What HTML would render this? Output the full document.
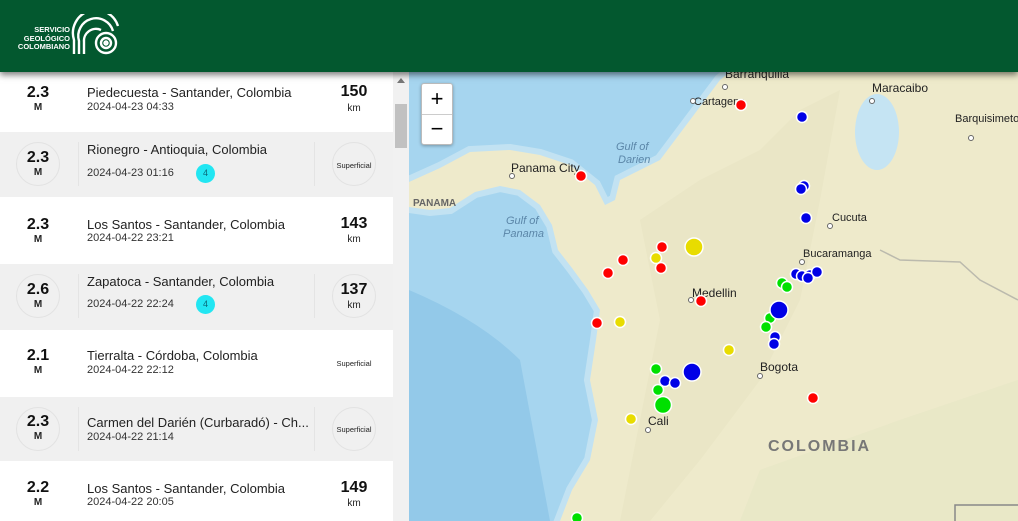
<!DOCTYPE html>
<html><head><meta charset="utf-8"><style>
*{margin:0;padding:0;box-sizing:border-box}
body{width:1018px;height:521px;overflow:hidden;font-family:"Liberation Sans",sans-serif;background:#fff;position:relative}
.hdr{position:absolute;left:0;top:0;width:1018px;height:72px;background:#03582f;box-shadow:0 3px 6px rgba(0,0,0,.5);z-index:5}
.logo{position:absolute;left:16px;top:26px;color:#fff;font-size:7.5px;font-weight:bold;line-height:8.5px;text-align:right;width:54px}
.panel{position:absolute;left:0;top:72px;width:393px;height:449px;overflow:hidden}
.row{position:absolute;left:0;width:393px}
.g{background:#f0f0f0}
.mag{position:absolute;left:18px;width:40px;text-align:center;font-size:16px;font-weight:bold;color:#111}
.m{position:absolute;left:18px;width:40px;text-align:center;font-size:10px;font-weight:bold;color:#222}
.t{position:absolute;left:87px;font-size:13px;color:#222;white-space:nowrap}
.d{position:absolute;left:87px;font-size:11px;color:#333}
.dep{position:absolute;left:334px;width:40px;text-align:center;font-size:16px;font-weight:bold;color:#111}
.km{position:absolute;left:334px;width:40px;text-align:center;font-size:10px;color:#222}
.sup{position:absolute;left:330px;width:48px;text-align:center;font-size:7.5px;color:#222}
.circ{position:absolute;width:44px;height:44px;border-radius:50%;border:1px solid #e2e2e2}
.vl{position:absolute;width:1px;background:#e4e4e4}
.badge{position:absolute;left:196px;width:19px;height:19px;border-radius:50%;background:#22e6f2;color:#0a6a7a;font-size:9px;text-align:center;line-height:19px}
.sb{position:absolute;left:393px;top:72px;width:16px;height:449px;background:#f1f1f1}
.map{position:absolute;left:409px;top:72px;width:609px;height:449px}
.zoom{position:absolute;left:421px;top:83px;width:32px;height:62px;background:#fff;border:1px solid #bbb;border-radius:3px;box-shadow:0 1px 3px rgba(0,0,0,.3)}
</style></head><body>
<div class="hdr">
<div class="logo">SERVICIO<br>GEOLÓGICO<br>COLOMBIANO</div>
<svg style="position:absolute;left:71px;top:14px" width="52" height="44" viewBox="0 0 52 44" fill="none" stroke="#fff" stroke-width="2.4">
<path d="M3 40 V26 A22 22 0 0 1 47 12"/><path d="M8 40 V27 A17 17 0 0 1 42 17"/><path d="M13 40 V28 A12 12 0 0 1 30 16"/>
<circle cx="35" cy="29" r="10"/><circle cx="35" cy="29" r="5"/><circle cx="35" cy="29" r="1.5"/>
</svg>
</div>

<div class="panel">
<div class="row" style="top:-4px;height:64px"><div class="mag" style="top:16px">2.3</div><div class="m" style="top:34px">M</div><div class="t" style="top:17px">Piedecuesta - Santander, Colombia</div><div class="d" style="top:33px">2024-04-23 04:33</div><div class="dep" style="top:15px">150</div><div class="km" style="top:35px">km</div></div>
<div class="row g" style="top:60px;height:65px"><div class="circ" style="left:16px;top:10px"></div><div class="vl" style="left:78px;top:10px;height:44px"></div><div class="vl" style="left:314px;top:10px;height:44px"></div><div class="circ" style="left:332px;top:10px"></div><div class="mag" style="top:17px">2.3</div><div class="m" style="top:35px">M</div><div class="t" style="top:10px">Rionegro - Antioquia, Colombia</div><div class="d" style="top:35px">2024-04-23 01:16</div><div class="badge" style="top:32px">4</div><div class="sup" style="top:29px">Superficial</div></div>
<div class="row" style="top:125px;height:67px"><div class="mag" style="top:19px">2.3</div><div class="m" style="top:37px">M</div><div class="t" style="top:20px">Los Santos - Santander, Colombia</div><div class="d" style="top:35px">2024-04-22 23:21</div><div class="dep" style="top:18px">143</div><div class="km" style="top:37px">km</div></div>
<div class="row g" style="top:192px;height:66px"><div class="circ" style="left:16px;top:10px"></div><div class="vl" style="left:78px;top:10px;height:44px"></div><div class="vl" style="left:314px;top:10px;height:44px"></div><div class="circ" style="left:332px;top:10px"></div><div class="mag" style="top:17px">2.6</div><div class="m" style="top:35px">M</div><div class="t" style="top:10px">Zapatoca - Santander, Colombia</div><div class="d" style="top:34px">2024-04-22 22:24</div><div class="badge" style="top:31px">4</div><div class="dep" style="top:17px">137</div><div class="km" style="top:36px">km</div></div>
<div class="row" style="top:258px;height:67px"><div class="mag" style="top:17px">2.1</div><div class="m" style="top:35px">M</div><div class="t" style="top:18px">Tierralta - Córdoba, Colombia</div><div class="d" style="top:34px">2024-04-22 22:12</div><div class="sup" style="top:29px">Superficial</div></div>
<div class="row g" style="top:325px;height:64px"><div class="circ" style="left:16px;top:10px"></div><div class="vl" style="left:78px;top:10px;height:44px"></div><div class="vl" style="left:314px;top:10px;height:44px"></div><div class="circ" style="left:332px;top:10px"></div><div class="mag" style="top:16px">2.3</div><div class="m" style="top:34px">M</div><div class="t" style="top:18px">Carmen del Darién (Curbaradó) - Ch...</div><div class="d" style="top:34px">2024-04-22 21:14</div><div class="sup" style="top:28px">Superficial</div></div>
<div class="row" style="top:389px;height:70px"><div class="mag" style="top:18px">2.2</div><div class="m" style="top:36px">M</div><div class="t" style="top:20px">Los Santos - Santander, Colombia</div><div class="d" style="top:35px">2024-04-22 20:05</div><div class="dep" style="top:18px">149</div><div class="km" style="top:37px">km</div></div>
</div>
<div class="sb"><div style="position:absolute;left:2px;top:32px;width:12px;height:44px;background:#c1c1c1"></div><div style="position:absolute;left:4px;top:6px;border-left:4px solid transparent;border-right:4px solid transparent;border-bottom:5px solid #777"></div></div>

<svg class="map" viewBox="409 72 609 449" width="609" height="449">
<rect x="409" y="72" width="609" height="449" fill="#a6d5ef"/>
<path d="M409 290 Q480 320 520 360 L550 521 L409 521 Z" fill="#93c9e9"/>
<path d="M409 182 L440 168 470 152 510 150 540 155 570 165 595 185 605 205 615 200 620 180 640 170 660 160 675 140 690 120 705 100 720 80 730 72 L1018 72 L1018 521 L560 521 L572 490 590 460 598 420 590 380 596 340 600 310 588 290 572 268 558 250 552 225 540 205 520 190 500 186 475 192 450 208 430 210 409 207 Z" fill="#c2e2f2" stroke="#c2e2f2" stroke-width="12"/>
<path d="M409 182 L440 168 470 152 510 150 540 155 570 165 595 185 605 205 615 200 620 180 640 170 660 160 675 140 690 120 705 100 720 80 730 72 L1018 72 L1018 521 L560 521 L572 490 590 460 598 420 590 380 596 340 600 310 588 290 572 268 558 250 552 225 540 205 520 190 500 186 475 192 450 208 430 210 409 207 Z" fill="#eeeacb"/>
<path d="M640 220 L700 180 760 150 800 110 840 90 820 200 800 300 760 380 700 460 650 521 620 521 640 420 660 320 Z" fill="#e3e2bf" opacity=".4"/>
<path d="M760 470 L900 420 1018 380 1018 521 740 521 Z" fill="#e3e6c4" opacity=".5"/>
<ellipse cx="877" cy="132" rx="22" ry="38" fill="#c5e4f3"/>
<path d="M1018 300 L980 280 960 262 900 260 880 250" stroke="#999" stroke-width="1.5" fill="none" opacity=".6"/>
<path d="M955 521 V505 H1018" stroke="#888" stroke-width="1.5" fill="none"/>
<g font-family="Liberation Sans,sans-serif" font-size="12" fill="#222">
<text x="725" y="78">Barranquilla</text><text x="694" y="105" font-size="11">Cartagena</text>
<text x="872" y="92">Maracaibo</text><text x="955" y="122" font-size="11">Barquisimeto</text>
<text x="511" y="172">Panama City</text><text x="832" y="221" font-size="11">Cucuta</text>
<text x="803" y="257" font-size="11">Bucaramanga</text><text x="692" y="297">Medellin</text>
<text x="760" y="371">Bogota</text><text x="648" y="425">Cali</text>
<text x="413" y="206" font-size="10" fill="#666" font-weight="bold">PANAMA</text>
<text x="768" y="451" font-size="16" fill="#777" font-weight="bold" letter-spacing="2">COLOMBIA</text>
<text x="616" y="150" font-size="11" fill="#5b86a8" font-style="italic">Gulf of</text><text x="618" y="163" font-size="11" fill="#5b86a8" font-style="italic">Darien</text>
<text x="506" y="224" font-size="11" fill="#5b86a8" font-style="italic">Gulf of</text><text x="503" y="237" font-size="11" fill="#5b86a8" font-style="italic">Panama</text>
</g>
<g fill="#fff" stroke="#666" stroke-width="1"><circle cx="725" cy="87" r="2.5"/><circle cx="693" cy="101" r="2.5"/><circle cx="872" cy="101" r="2.5"/><circle cx="512" cy="176" r="2.5"/><circle cx="830" cy="226" r="2.5"/><circle cx="802" cy="262" r="2.5"/><circle cx="691" cy="300" r="2.5"/><circle cx="760" cy="376" r="2.5"/><circle cx="648" cy="430" r="2.5"/><circle cx="971" cy="138" r="2.5"/></g>
<g stroke="#fff" stroke-width="1.5">
<g fill="#f00"><circle cx="741" cy="105" r="5.5"/><circle cx="581" cy="176" r="5.5"/><circle cx="662" cy="247" r="5.5"/><circle cx="623" cy="260" r="5.5"/><circle cx="661" cy="268" r="5.5"/><circle cx="608" cy="273" r="5.5"/><circle cx="701" cy="301" r="5.5"/><circle cx="597" cy="323" r="5.5"/><circle cx="813" cy="398" r="5.5"/></g>
<g fill="#e8dc00"><circle cx="694" cy="247" r="9"/><circle cx="656" cy="258" r="5.5"/><circle cx="620" cy="322" r="5.5"/><circle cx="729" cy="350" r="5.5"/><circle cx="631" cy="419" r="5.5"/></g>
<g fill="#00e000"><circle cx="782" cy="283" r="5.5"/><circle cx="787" cy="287" r="5.5"/><circle cx="770" cy="318" r="5.5"/><circle cx="766" cy="327" r="5.5"/><circle cx="656" cy="369" r="5.5"/><circle cx="658" cy="390" r="5.5"/><circle cx="663" cy="405" r="8.5"/><circle cx="577" cy="518" r="5.5"/></g>
<g fill="#0000e6"><circle cx="802" cy="117" r="5.5"/><circle cx="804" cy="186" r="5.5"/><circle cx="801" cy="189" r="5.5"/><circle cx="806" cy="218" r="5.5"/><circle cx="796" cy="274" r="5.5"/><circle cx="802" cy="276" r="5.5"/><circle cx="810" cy="275" r="5.5"/><circle cx="817" cy="272" r="5.5"/><circle cx="808" cy="278" r="5.5"/><circle cx="779" cy="310" r="9"/><circle cx="775" cy="337" r="5.5"/><circle cx="774" cy="344" r="5.5"/><circle cx="692" cy="372" r="9"/><circle cx="665" cy="381" r="5.5"/><circle cx="675" cy="383" r="5.5"/></g>
</g>
</svg>
<div class="zoom"><div style="height:31px;border-bottom:1px solid #ccc;text-align:center;font-size:22px;line-height:30px;color:#000">+</div><div style="text-align:center;font-size:22px;line-height:28px;color:#000">−</div></div>
</body></html>
